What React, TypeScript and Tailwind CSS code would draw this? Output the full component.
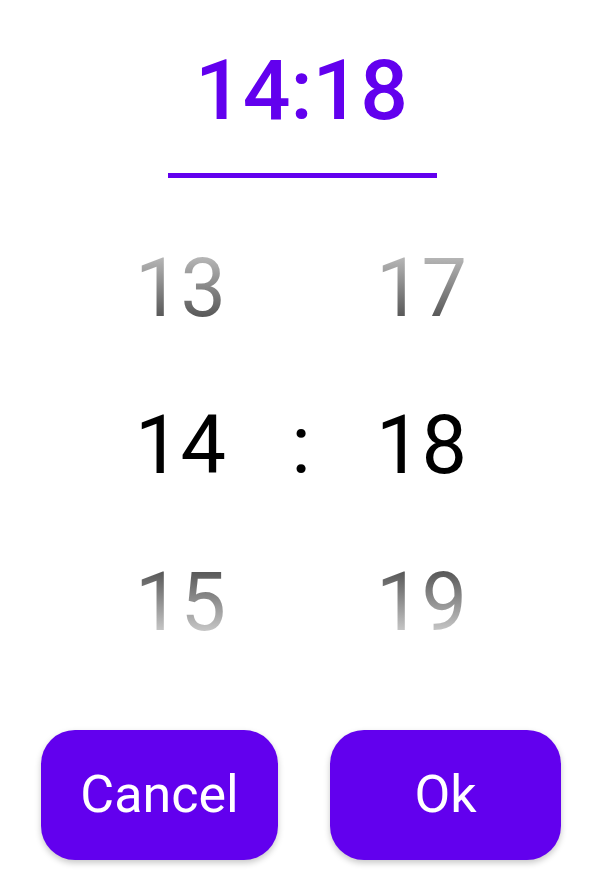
import React from 'react'

const fadeTop =
  'bg-[linear-gradient(to_bottom,#b4b4b4_31%,#585858_68%)] bg-clip-text text-transparent'
const fadeBottom =
  'bg-[linear-gradient(to_bottom,#5a5a5a_31%,#c6c6c6_68%)] bg-clip-text text-transparent'

const TimePicker: React.FC = () => {
  const hour = 14
  const minute = 18

  const rows = [
    { h: hour - 1, m: minute - 1, cls: fadeTop },
    { h: hour, m: minute, cls: 'text-black' },
    { h: hour + 1, m: minute + 1, cls: fadeBottom },
  ]

  return (
    <div className="w-full h-[874px] bg-white font-['Roboto',sans-serif] flex flex-col items-center">
      <div className="mt-[49px] pr-[2px] text-[84px] leading-none font-medium text-[#6200ee]">
        {hour}:{minute}
      </div>
      <div className="mt-[40px] w-[269px] h-[5px] bg-[#6200ee]" />

      <div className="mt-[32px] flex flex-col pr-[3px]">
        {rows.map((r, i) => (
          <div key={i} className="flex h-[157px] items-start text-[81px] leading-[157px]">
            <span className={`w-[160px] text-center ${r.cls}`}>{r.h}</span>
            <span className="w-[81px] text-center text-black">{i === 1 ? ':' : ''}</span>
            <span className={`w-[160px] text-center ${r.cls}`}>{r.m}</span>
          </div>
        ))}
      </div>

      <div className="mt-[49px] flex w-full gap-[52px] pl-[41px]">
        <button className="w-[237px] h-[130px] rounded-[34px] bg-[#6200ee] text-white text-[52px] shadow-[0_3px_6px_rgba(0,0,0,0.22)]">
          Cancel
        </button>
        <button className="w-[231px] h-[130px] rounded-[34px] bg-[#6200ee] text-white text-[52px] shadow-[0_3px_6px_rgba(0,0,0,0.22)]">
          Ok
        </button>
      </div>
    </div>
  )
}

export default function App() {
  return <TimePicker />
}
